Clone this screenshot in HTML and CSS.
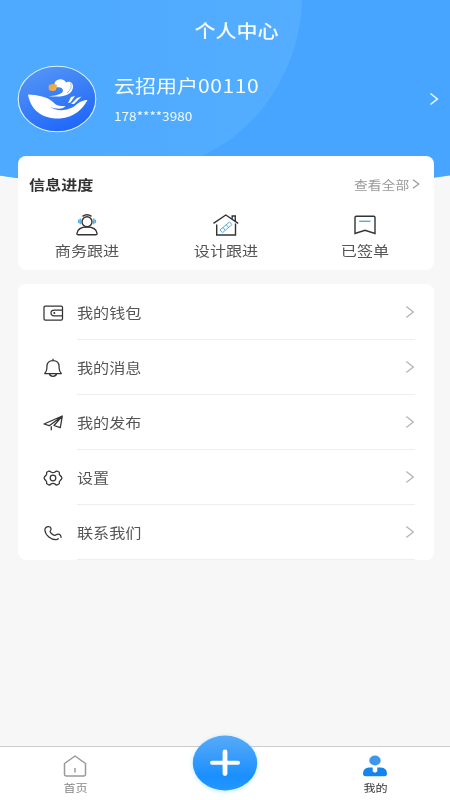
FILE: index.html
```html
<!DOCTYPE html>
<html lang="zh-CN">
<head>
<meta charset="UTF-8">
<meta name="viewport" content="width=device-width, initial-scale=1">
<title>个人中心</title>
<link rel="stylesheet" href="styles.css">
</head>
<body>
<div class="app">
  <header class="hero">
    <svg class="hero-bg" viewBox="0 0 450 200" preserveAspectRatio="none" aria-hidden="true">
      <defs>
        <linearGradient id="glow" x1="0" y1="0" x2="1" y2="0"><stop offset="0.3" stop-color="#4eaaff"/><stop offset="1" stop-color="#54adff"/></linearGradient>
        <clipPath id="bowl"><path d="M0 0H450V175.500Q225 211 0 175.500Z"/></clipPath>
      </defs>
      <g clip-path="url(#bowl)">
        <path fill="#48a5ff" d="M0 0H450V200H0Z"/>
        <path fill="url(#glow)" d="M0 0H302C300 62 266 126 203 155V200H0Z"/>
      </g>
    </svg>
    <h1 class="title"><span class="wide">个人中心</span></h1>
    <div class="profile">
      <svg class="avatar" viewBox="0 0 80 68" aria-hidden="true">
        <defs><linearGradient id="face" x1=".2" y1="0" x2=".7" y2="1"><stop offset="0" stop-color="#5596f5"/><stop offset="1" stop-color="#1d66fa"/></linearGradient>
        <linearGradient id="sun" x1="0" y1="0" x2="1" y2="1"><stop offset="0" stop-color="#e3a04e"/><stop offset="1" stop-color="#ffb52f"/></linearGradient></defs>
        <ellipse cx="40" cy="34" rx="38.800" ry="32.800" fill="url(#face)" stroke="#d9f1ff" stroke-width="1.100"/>
        <path fill="#fff" d="M11 29.500C20 30 31 31.500 36.500 37.500C40 41.500 45 41 48.500 41C45 45 39 44 33 42C40 47 53 46 60 39C64 36 67 35 70.500 35C66 44 57 52.500 43 53.500C26 54 14 46 11 29.500Z"/>
        <path fill="#fff" d="M31 31C39 31 46 29 46 25.500C46 22.500 42 21.500 39.500 22.500Q36.500 20 38 17C41 12.500 48 14 49 17.500C53 15.500 56.500 18 56 22.500C55 30 46 33 31 31Z"/>
        <path d="M53.500 18Q56 23 50 28" fill="none" stroke="#6f9ff5" stroke-width=".7"/>
        <path fill="#fff" d="M51 38L54 32L58 31L53.500 37.500ZM54 39L60 33L64.500 31.500L57 39Z"/>
        <path fill="url(#sun)" d="M32 20Q36 18 40 20L39 25Q36 27 32 25Q31 22 32 20Z"/>
      </svg>
      <div class="who">
        <div class="name"><span class="wide">云招用户<span class="digits">00110</span></span></div>
        <div class="phone"><span class="wide">178****3980</span></div>
      </div>
      <svg class="hero-arrow" viewBox="0 0 10 14"><path d="M1.500 1.500L8.300 7L1.500 12.500"/></svg>
    </div>
  </header>

  <main class="content">
    <section class="card progress">
      <div class="card-head">
        <h2><span class="wide">信息进度</span></h2>
        <a class="more"><span class="wide">查看全部</span><svg viewBox="0 0 8 10"><path d="M1 .7L6.800 5L1 9.300"/></svg></a>
      </div>
      <div class="steps">
        <div class="step">
          <svg class="step-icon" viewBox="0 0 24 24"><circle cx="12" cy="8.800" r="5"/><path d="M7.500 3.300Q12 .3 16.500 3.300M3.300 21.800H20.700Q22.100 21.800 22.100 20.500C21.500 16.500 17.500 14 12 14S2.500 16.500 1.900 20.500Q1.900 21.800 3.300 21.800Z"/><path class="blue" d="M5.200 5.500V11.200M18.800 5.500V11.200M3.600 6.800V10M20.400 6.800V10"/></svg>
          <span class="label">商务跟进</span>
        </div>
        <div class="step">
          <svg class="step-icon house" viewBox="0 0 28 24"><path d="M1.500 10.300L13.800 2L26.200 10.300M20.200 5.700V3H23.300V8M4.700 11.500V22H23.500V10.500"/><path class="blue thin" d="M8 17L17.500 9L20 11.500L10.500 19.700ZM11 14.500L13 17M14.300 11.800L16.500 14.300"/></svg>
          <span class="label">设计跟进</span>
        </div>
        <div class="step">
          <svg class="step-icon" viewBox="0 0 24 24"><path d="M3.200 3.200H20.800Q22 3.200 22 4.400V20.500L12 17.300L2 20.500V4.400Q2 3.200 3.200 3.200Z"/><path class="blue" d="M6.200 8.300H17.500"/></svg>
          <span class="label">已签单</span>
        </div>
      </div>
    </section>

    <nav class="card menu">
      <a class="row"><svg class="row-icon" viewBox="0 0 22 22"><rect x="2" y="4" width="18.500" height="14" rx="1.300"/><path d="M20.500 8.200H12.500Q9 8.200 9 11T12.500 13.800H20.500"/><circle class="dot" cx="12.300" cy="11" r="1"/></svg><span class="row-body"><span class="wide">我的钱包</span><svg class="arrow" viewBox="0 0 10 14"><path d="M1.300 1.500L8.300 7L1.300 12.500"/></svg></span></a>
      <a class="row"><svg class="row-icon" viewBox="0 0 22 22"><path d="M11 1.700V3.400M2.700 16.500Q4.800 14.500 4.900 11V9.500Q5 3.500 11 3.500T17.100 9.500V11Q17.200 14.500 19.300 16.500ZM7.500 17Q8 19.300 11 19.300T14.500 17"/></svg><span class="row-body"><span class="wide">我的消息</span><svg class="arrow" viewBox="0 0 10 14"><path d="M1.300 1.500L8.300 7L1.300 12.500"/></svg></span></a>
      <a class="row"><svg class="row-icon" viewBox="0 0 22 22"><path d="M20.300 4L2 12L7.300 13.700L20.300 4L18.300 15.700L12 13.500L20.300 4M9.300 14.300V18.300"/></svg><span class="row-body"><span class="wide">我的发布</span><svg class="arrow" viewBox="0 0 10 14"><path d="M1.300 1.500L8.300 7L1.300 12.500"/></svg></span></a>
      <a class="row"><svg class="row-icon" viewBox="0 0 22 22"><circle cx="11" cy="11" r="2.800"/><path d="M7 4Q8.200 4 9 5Q11 6.200 13 5Q13.800 4 15 4L17.300 5.200Q17 7.800 18.200 8.500L19.600 10Q20.200 11 19.600 12L18.200 13.500Q17 14.300 17.300 16.800L15 18Q13.800 18 13 17Q11 15.800 9 17Q8.200 18 7 18L4.700 16.800Q5 14.300 3.800 13.500L2.400 12Q1.800 11 2.400 10L3.800 8.500Q5 7.800 4.700 5.200Z"/></svg><span class="row-body"><span class="wide">设置</span><svg class="arrow" viewBox="0 0 10 14"><path d="M1.300 1.500L8.300 7L1.300 12.500"/></svg></span></a>
      <a class="row"><svg class="row-icon" viewBox="0 0 22 22"><path d="M8.300 8.800C9.800 7.300 8.900 4.700 6.800 4.700C4.400 4.500 2.700 6 2.900 8.300C3.400 13.300 9.200 17.800 14.300 17.600C15.500 17.600 16.300 17 16.500 16.200M8.300 8.800C7.300 10 10.800 13.300 12.800 13.300C14.200 13.300 14.300 12 16 12C18 12 19.300 13.500 19 15.800"/></svg><span class="row-body"><span class="wide">联系我们</span><svg class="arrow" viewBox="0 0 10 14"><path d="M1.300 1.500L8.300 7L1.300 12.500"/></svg></span></a>
    </nav>
  </main>

  <footer class="tabs">
    <a class="tab">
      <svg class="tab-icon" viewBox="0 0 24 24"><path class="home" d="M1.500 9.500L12 2L22.500 9.500V20.600Q22.500 22 21 22H3Q1.500 22 1.500 20.600ZM12 14V18.500"/></svg>
      <span>首页</span>
    </a>
    <a class="add"><svg viewBox="0 0 66 56"><defs><linearGradient id="button" x1="0" y1="0" x2="0" y2="1"><stop offset="0" stop-color="#58aaf8"/><stop offset=".75" stop-color="#1a8fff"/><stop offset="1" stop-color="#2498ff"/></linearGradient></defs><ellipse cx="33" cy="28" rx="32.200" ry="27.400" fill="url(#button)"/><path d="M33 17V38.500" stroke="#fff" stroke-width="4.800" stroke-linecap="round"/><path d="M20 27.800H46" stroke="#fff" stroke-width="4" stroke-linecap="round"/></svg></a>
    <a class="tab active">
      <svg class="tab-icon" viewBox="0 0 24 24"><ellipse cx="12" cy="6.500" rx="5.700" ry="5" fill="#3f96ed"/><path fill="#1684ee" d="M6 13.500H9.700V17.500L12 18.800L14.300 17.500V13.500H18Q23.800 13.800 24 19.500Q24 22.300 21.500 22.300H2.500Q0 22.300 0 19.500Q.2 13.800 6 13.500Z"/></svg>
      <span>我的</span>
    </a>
  </footer>
</div>
</body>
</html>
```

FILE: styles.css
```css
* { box-sizing: border-box; }
body {
  margin: 0;
  background: #f7f7f7;
  color: #555;
  font-family: "Noto Sans CJK SC", sans-serif;
}
svg { display: block; flex: none; fill: none; }
h1, h2 { margin: 0; font-weight: 400; }
.app { height: 800px; display: flex; flex-direction: column; overflow: hidden; }

/* Text is drawn slightly wider than the font's natural width. */
.wide { display: inline-block; transform: scaleX(1.15); transform-origin: left center; white-space: nowrap; }

.hero { position: relative; height: 156px; color: #f3fcff; flex: none; }
.hero-bg { position: absolute; top: 0; left: 0; width: 100%; height: 200px; }
.title { position: relative; padding-top: 17px; margin-left: 23px; text-align: center; font-size: 18.300px; font-weight: 500; line-height: 27px; }
.title .wide { transform-origin: center; }
.profile { position: relative; display: flex; align-items: center; margin-top: 21px; padding: 0 11px 0 17px; height: 68px; }
.avatar { width: 80px; height: 68px; }
.who { flex: 1; margin-left: 17px; padding-bottom: 3px; }
.name { font-size: 18.300px; line-height: 28px; }
.digits { letter-spacing: .5px; }
.phone { font-size: 12px; line-height: 18px; margin-top: 8px; }
.phone .wide { transform: scaleX(1.135); }
.hero-arrow { width: 10px; height: 14px; stroke: #e8f8ff; stroke-width: 1.600; }

.content { position: relative; flex: 1; padding: 0 16px 0 17.500px; }
.card { background: #fff; border-radius: 8px; }
.progress { height: 113.500px; padding: 16px 14px 0 11.500px; }
.card-head { display: flex; justify-content: space-between; align-items: center; height: 24px; }
.card-head h2 { font-size: 14px; font-weight: 700; line-height: 24px; color: #333; }
.more { display: flex; align-items: center; gap: 10px; color: #999; font-size: 12px; }
.more svg { width: 8px; height: 10px; stroke: #999; stroke-width: 1.200; }
.steps { display: grid; grid-template-columns: repeat(3, 138.700px); margin-left: -11px; padding-top: 17px; }
.step { display: flex; flex-direction: column; align-items: center; }
.step-icon { width: 24px; height: 24px; stroke: #333; stroke-width: 1.400; }
.step-icon.house { width: 28px; }
.step-icon .blue { stroke: #54abdf; }
.step-icon .thin { stroke-width: 1; }
.label { font-size: 14px; line-height: 22px; margin-top: 2px; transform: scaleX(1.15); }

.menu { margin-top: 14.500px; height: 275.500px; padding: 1px 19px 0 24.500px; }
.row { display: flex; align-items: center; gap: 12.500px; height: 55px; }
.row-icon { width: 22px; height: 22px; stroke: #333; stroke-width: 1.250; stroke-linejoin: round; }
.row-icon .dot { fill: #333; stroke: none; }
.row-body { flex: 1; height: 55px; padding-bottom: 1px; display: flex; align-items: center; justify-content: space-between; border-bottom: 1px solid #eee; font-size: 14px; }
.row-body .wide { line-height: 20px; }
.arrow { width: 10px; height: 14px; margin-top: 1px; stroke: #b4b4b4; stroke-width: 1.300; }

.tabs { position: relative; height: 54px; flex: none; display: grid; grid-template-columns: repeat(3, 1fr); border-top: 1px solid #ccc; background: #fff; }
.tab { display: flex; flex-direction: column; align-items: center; padding-top: 7px; color: #888; font-size: 10.500px; line-height: 16px; }
.tab span { margin-top: 2px; transform: scaleX(1.15); }
.tab-icon { width: 24px; height: 24px; }
.home { stroke: #999; stroke-width: 1.500; stroke-linejoin: round; }
.active { color: #333; }
.add { justify-self: center; margin-top: -12px; }
.add svg { width: 66px; height: 56px; filter: drop-shadow(0 1px 2px #83d5ff99); overflow: visible; }
```
